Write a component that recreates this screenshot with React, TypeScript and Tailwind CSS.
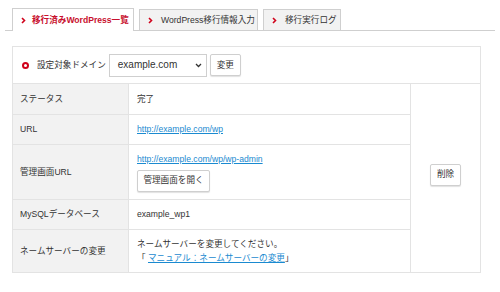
import React from "react";

const Chevron = () => (
  <svg width="5" height="7" viewBox="0 0 5 7" className="shrink-0">
    <path d="M1 1 L3.5 3.5 L1 6" fill="none" stroke="#d0021b" strokeWidth="1.6" />
  </svg>
);

export default function App() {
  return (
    <div
      className="w-[500px] h-[292px] bg-white text-[#333] text-[8.6px] leading-none"
      style={{ fontFamily: '"Liberation Sans", "Noto Sans CJK JP", sans-serif' }}
    >
      <div className="pt-[8px] px-[5px]">
        <div className="flex items-end border-b border-[#cfcfcf] pl-[7px] gap-[5px] h-[23px]">
          <div className="relative -mb-px h-[23px] w-[122px] bg-white border border-b-0 border-[#cfcfcf] flex items-center gap-[6px] pl-[8px] text-[#c8102e] font-bold">
            <Chevron />
            <span>移行済みWordPress一覧</span>
          </div>
          <div className="h-[21px] w-[119px] bg-[#f2f2f2] border border-b-0 border-[#cfcfcf] flex items-center gap-[8px] pl-[8px]">
            <Chevron />
            <span>WordPress移行情報入力</span>
          </div>
          <div className="h-[21px] w-[78px] bg-[#f2f2f2] border border-b-0 border-[#cfcfcf] flex items-center gap-[8px] pl-[8px]">
            <Chevron />
            <span>移行実行ログ</span>
          </div>
        </div>
      </div>

      <div className="ml-[12px] mt-[15px] w-[469px] border border-[#e3e3e3]">
        <div className="h-[36px] flex items-center pl-[9px]">
          <span className="w-[7px] h-[7px] rounded-full border-[2px] border-[#d0021b]" />
          <span className="ml-[8px] text-[#333]">設定対象ドメイン</span>
          <div className="ml-[3px] h-[23px] w-[98px] border border-[#cfcfcf] flex items-center justify-between pl-[8px] pr-[4px] text-[10px]">
            <span>example.com</span>
            <svg width="7" height="5" viewBox="0 0 7 5">
              <path d="M1 1 L3.5 3.5 L6 1" fill="none" stroke="#333" strokeWidth="1.3" />
            </svg>
          </div>
          <div className="ml-[3px] h-[22px] w-[31px] border border-[#cfcfcf] rounded-[2px] bg-white shadow-[0_1px_1px_rgba(0,0,0,0.12)] flex items-center justify-center">
            変更
          </div>
        </div>

        <div className="flex border-t border-[#e3e3e3]">
          <div className="w-[397px] flex flex-col">
            <div className="flex h-[31px] border-b border-[#e3e3e3]">
              <div className="w-[116px] bg-[#f2f2f2] border-r border-[#e3e3e3] flex items-center pl-[7px]">ステータス</div>
              <div className="flex-1 flex items-center pl-[8px]">完了</div>
            </div>
            <div className="flex h-[30px] border-b border-[#e3e3e3]">
              <div className="w-[116px] bg-[#f2f2f2] border-r border-[#e3e3e3] flex items-center pl-[7px]">URL</div>
              <div className="flex-1 flex items-center pl-[8px]">
                <span className="text-[#1a8ad0] underline">http://example.com/wp</span>
              </div>
            </div>
            <div className="flex h-[55px] border-b border-[#e3e3e3]">
              <div className="w-[116px] bg-[#f2f2f2] border-r border-[#e3e3e3] flex items-center pl-[7px]">管理画面URL</div>
              <div className="flex-1 flex flex-col items-start pl-[8px] pt-[10px] gap-[6px]">
                <span className="text-[#1a8ad0] underline">http://example.com/wp/wp-admin</span>
                <div className="h-[22px] w-[73px] border border-[#cfcfcf] rounded-[2px] bg-white shadow-[0_1px_1px_rgba(0,0,0,0.12)] flex items-center justify-center">
                  管理画面を開く
                </div>
              </div>
            </div>
            <div className="flex h-[30px] border-b border-[#e3e3e3]">
              <div className="w-[116px] bg-[#f2f2f2] border-r border-[#e3e3e3] flex items-center pl-[7px]">MySQLデータベース</div>
              <div className="flex-1 flex items-center pl-[8px]">example_wp1</div>
            </div>
            <div className="flex h-[42px]">
              <div className="w-[116px] bg-[#f2f2f2] border-r border-[#e3e3e3] flex items-center pl-[7px]">ネームサーバーの変更</div>
              <div className="flex-1 flex flex-col justify-center pl-[8px] gap-[5px]">
                <span>ネームサーバーを変更してください。</span>
                <span>
                  「 <span className="text-[#1a8ad0] underline">マニュアル：ネームサーバーの変更</span>」
                </span>
              </div>
            </div>
          </div>
          <div className="flex-1 border-l border-[#e3e3e3] flex items-center justify-center pb-[7px]">
            <div className="h-[22px] w-[31px] border border-[#cfcfcf] rounded-[2px] bg-white shadow-[0_1px_1px_rgba(0,0,0,0.12)] flex items-center justify-center">
              削除
            </div>
          </div>
        </div>
      </div>
    </div>
  );
}
